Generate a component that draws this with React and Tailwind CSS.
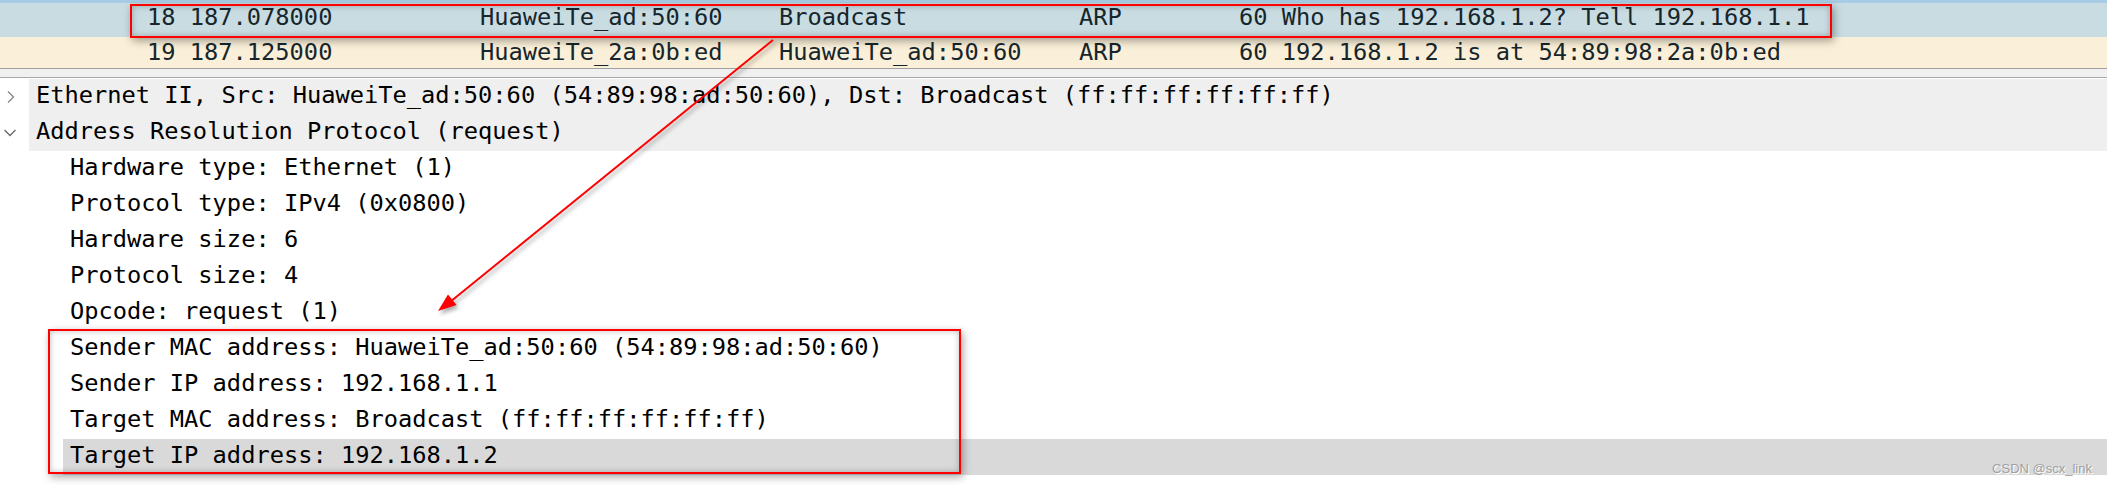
import React from "react";

const mono = { fontFamily: '"DejaVu Sans Mono", "Liberation Mono", monospace' };

function ChevronRight() {
  return (
    <svg width="10" height="14" viewBox="0 0 10 14" className="ml-[6px]">
      <path d="M2 1.5 L7.5 7 L2 12.5" fill="none" stroke="#8a8a8a" strokeWidth="1.4" />
    </svg>
  );
}

function ChevronDown() {
  return (
    <svg width="14" height="10" viewBox="0 0 14 10" className="ml-[3px]">
      <path d="M1.5 2 L7 7.5 L12.5 2" fill="none" stroke="#6a6a6a" strokeWidth="1.4" />
    </svg>
  );
}

function TopRow({ bg, h, lead, cols }) {
  return (
    <div className={`flex ${bg} ${h} text-[#16262c] text-[23.7px] whitespace-pre`} style={mono}>
      <div className={`w-[480px] pl-[147px] ${lead}`}>{cols[0]}</div>
      <div className={`w-[299px] ${lead}`}>{cols[1]}</div>
      <div className={`w-[300px] ${lead}`}>{cols[2]}</div>
      <div className={`w-[160px] ${lead}`}>{cols[3]}</div>
      <div className={`flex-1 ${lead}`}>{cols[4]}</div>
    </div>
  );
}

function DetailRow({ level, text, bg = "", icon = null }) {
  return (
    <div className="flex h-[36px]">
      <div className={`${level === 0 ? "w-[29px]" : "w-[63px]"} flex items-center shrink-0`}>{icon}</div>
      <div
        className={`flex-1 pl-[7px] leading-[33px] text-[23.7px] text-black whitespace-pre ${bg}`}
        style={mono}
      >
        {text}
      </div>
    </div>
  );
}

export default function App() {
  return (
    <div className="relative w-[2107px] h-[485px] overflow-hidden bg-white">
      {/* packet list */}
      <div className="h-[3px] bg-[#a9cce6]" />
      <TopRow
        bg="bg-[#c8dce1]"
        h="h-[34px]"
        lead="leading-[28px]"
        cols={["18 187.078000", "HuaweiTe_ad:50:60", "Broadcast", "ARP", "60 Who has 192.168.1.2? Tell 192.168.1.1"]}
      />
      <TopRow
        bg="bg-[#faefd8]"
        h="h-[31px]"
        lead="leading-[31px]"
        cols={["19 187.125000", "HuaweiTe_2a:0b:ed", "HuaweiTe_ad:50:60", "ARP", "60 192.168.1.2 is at 54:89:98:2a:0b:ed"]}
      />
      <div className="h-[1px] bg-[#a0a0a0]" />
      <div className="h-[8px] bg-[#f0f0f0]" />
      <div className="h-[1px] bg-[#a8a8a8]" />
      <div className="h-[1px]" />

      {/* packet details */}
      <div className="flex flex-col">
        <DetailRow
          level={0}
          icon={<ChevronRight />}
          bg="bg-[#efefef]"
          text="Ethernet II, Src: HuaweiTe_ad:50:60 (54:89:98:ad:50:60), Dst: Broadcast (ff:ff:ff:ff:ff:ff)"
        />
        <DetailRow level={0} icon={<ChevronDown />} bg="bg-[#efefef]" text="Address Resolution Protocol (request)" />
        <DetailRow level={1} text="Hardware type: Ethernet (1)" />
        <DetailRow level={1} text="Protocol type: IPv4 (0x0800)" />
        <DetailRow level={1} text="Hardware size: 6" />
        <DetailRow level={1} text="Protocol size: 4" />
        <DetailRow level={1} text="Opcode: request (1)" />
        <DetailRow level={1} text="Sender MAC address: HuaweiTe_ad:50:60 (54:89:98:ad:50:60)" />
        <DetailRow level={1} text="Sender IP address: 192.168.1.1" />
        <DetailRow level={1} text="Target MAC address: Broadcast (ff:ff:ff:ff:ff:ff)" />
        <DetailRow level={1} bg="bg-[#d9d9d9]" text="Target IP address: 192.168.1.2" />
      </div>

      {/* annotation boxes */}
      <div className="absolute left-[130px] top-[4px] w-[1702px] h-[34px] border-2 border-[#ff0000] shadow-[2px_3px_8px_rgba(0,0,0,0.35),inset_0_0_6px_rgba(0,0,0,0.25)] pointer-events-none" />
      <div className="absolute left-[48px] top-[329px] w-[913px] h-[145px] border-2 border-[#ff0000] shadow-[2px_3px_8px_rgba(0,0,0,0.35),inset_0_0_6px_rgba(0,0,0,0.25)] pointer-events-none" />

      {/* arrow */}
      <svg
        className="absolute left-0 top-0 pointer-events-none drop-shadow-[2px_3px_2px_rgba(0,0,0,0.35)]"
        width="2107"
        height="485"
        viewBox="0 0 2107 485"
      >
        <line x1="773" y1="40" x2="450" y2="302" stroke="#ff0000" strokeWidth="2" />
        <polygon points="438,311 456.5,305 448,294.5" fill="#ff0000" />
      </svg>

      {/* watermark */}
      <div
        className="absolute right-[15px] bottom-[9px] text-[13px] leading-[14px] text-[#a0a0a0] [text-shadow:1px_1px_0_#ffffff]"
        style={{ fontFamily: '"Liberation Sans", Arial, sans-serif' }}
      >
        CSDN @scx_link
      </div>
    </div>
  );
}
